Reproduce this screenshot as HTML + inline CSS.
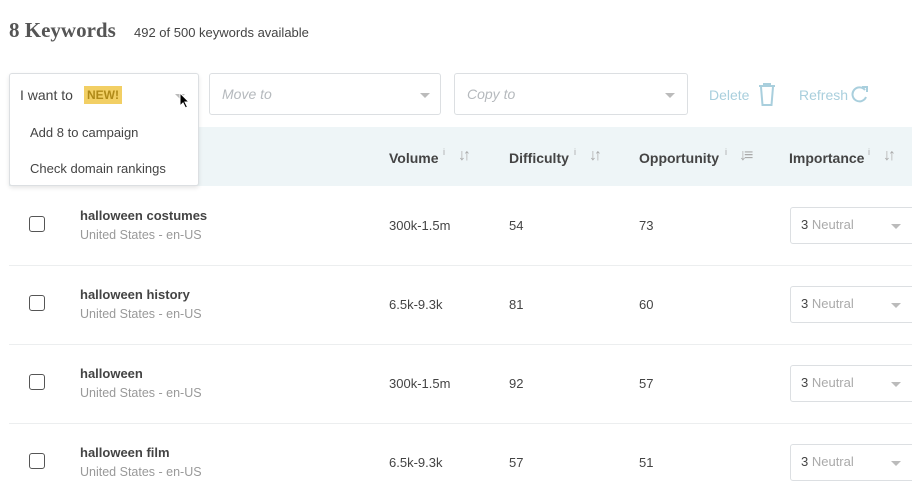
<!DOCTYPE html>
<html><head><style>
*{box-sizing:border-box;margin:0;padding:0}
body{width:912px;height:468px;overflow:hidden;background:#fff;font-family:"Liberation Sans",sans-serif;color:#444;position:relative}
.a{position:absolute;white-space:nowrap}
.sel{position:absolute;border:1px solid #dcdfe2;border-radius:3px;height:42px;top:73px;background:#fff}
.sel i{position:absolute;left:12px;top:12px;font-size:14px;color:#b5b9bd}
.tri{position:absolute;width:0;height:0;border-left:5px solid transparent;border-right:5px solid transparent;border-top:5px solid #aaa}
.hd{font-size:14px;font-weight:bold;color:#444;top:150px}
.sup{font-size:9px;color:#aaa;top:147px}
.srt{font-size:16px;color:#aaa;top:147px;letter-spacing:-3px}
.sep{position:absolute;left:9px;right:0;height:1px;background:#eceeef}
.cb{position:absolute;left:29px;width:16px;height:16px;border:1.5px solid #555;border-radius:3px}
.kw{font-size:13px;font-weight:bold;color:#444}
.loc{font-size:12.5px;color:#999}
.v{font-size:13px;color:#444}
.imp{position:absolute;left:790px;width:130px;height:37px;border:1px solid #dcdfe2;border-radius:3px;font-size:13px;padding:9px 10px;color:#444}
.imp span{color:#aaa}
.imp .tri{left:100px;top:16px;border-top-color:#bbb}
</style></head><body>
<div class="a" style="left:9px;top:18px;font-family:'Liberation Serif',serif;font-weight:bold;font-size:21px;color:#555">8 Keywords</div>
<div class="a" style="left:134px;top:25px;font-size:13px;color:#444">492 of 500 keywords available</div>

<div style="position:absolute;left:9px;top:127px;width:903px;height:59px;background:#eef5f7"></div>
<div class="a hd" style="left:389px">Volume</div><div class="a sup" style="left:443px">i</div><div class="a srt" style="left:458px">↓↑</div>
<div class="a hd" style="left:509px">Difficulty</div><div class="a sup" style="left:574px">i</div><div class="a srt" style="left:589px">↓↑</div>
<div class="a hd" style="left:639px">Opportunity</div><div class="a sup" style="left:725px">i</div><div class="a srt" style="left:739px">↓≡</div>
<div class="a hd" style="left:789px">Importance</div><div class="a sup" style="left:868px">i</div><div class="a srt" style="left:883px">↓↑</div>

<div class="sel" style="left:209px;width:232px"><i>Move to</i><div class="tri" style="right:10px;top:19px;border-top-color:#bbb"></div></div>
<div class="sel" style="left:454px;width:234px"><i>Copy to</i><div class="tri" style="right:12px;top:19px;border-top-color:#bbb"></div></div>
<div class="a" style="left:709px;top:87px;font-size:14px;color:#a9cfdd">Delete</div>
<svg class="a" style="left:757px;top:82px" width="20" height="25" viewBox="0 0 20 25"><path d="M2 4h16M7 4V2h6v2M4 5l1.5 18h9L16 5" fill="none" stroke="#a9cfdd" stroke-width="2"/></svg>
<div class="a" style="left:799px;top:87px;font-size:14px;color:#a9cfdd">Refresh</div>
<svg class="a" style="left:850px;top:85px" width="20" height="18" viewBox="0 0 20 18"><path d="M15 5A7 7 0 1 0 16 12" fill="none" stroke="#a9cfdd" stroke-width="2"/><path d="M12 2l5 0 0 5" fill="none" stroke="#a9cfdd" stroke-width="2"/></svg>

<div style="position:absolute;left:9px;top:73px;width:190px;height:113px;background:#fff;border:1px solid #dcdfe2;border-radius:3px;box-shadow:0 2px 4px rgba(0,0,0,.1)"></div>
<div class="a" style="left:20px;top:87px;font-size:14px;color:#444">I want to</div>
<div class="a" style="left:84px;top:86px;background:#f2cf64;color:#b08a18;font-size:12px;font-weight:bold;padding:2px 3px">NEW!</div>
<div class="tri" style="left:175px;top:94px;border-top-color:#bbb"></div>
<svg class="a" style="left:179px;top:92px" width="12" height="18" viewBox="0 0 12 18"><path d="M1 1v13l3-3 2.5 5 2-1-2.5-5h4z" fill="#000" stroke="#fff" stroke-width="1"/></svg>
<div class="a" style="left:30px;top:125px;font-size:13px;color:#444">Add 8 to campaign</div>
<div class="a" style="left:30px;top:161px;font-size:13px;color:#444">Check domain rankings</div>

<div class="sep" style="top:265px"></div><div class="sep" style="top:344px"></div><div class="sep" style="top:423px"></div>

<div class="cb" style="top:216px"></div>
<div class="a kw" style="left:80px;top:208px">halloween costumes</div>
<div class="a loc" style="left:80px;top:228px">United States - en-US</div>
<div class="a v" style="left:389px;top:218px">300k-1.5m</div><div class="a v" style="left:509px;top:218px">54</div><div class="a v" style="left:639px;top:218px">73</div>
<div class="imp" style="top:207px">3 <span>Neutral</span><div class="tri"></div></div>

<div class="cb" style="top:295px"></div>
<div class="a kw" style="left:80px;top:287px">halloween history</div>
<div class="a loc" style="left:80px;top:307px">United States - en-US</div>
<div class="a v" style="left:389px;top:297px">6.5k-9.3k</div><div class="a v" style="left:509px;top:297px">81</div><div class="a v" style="left:639px;top:297px">60</div>
<div class="imp" style="top:286px">3 <span>Neutral</span><div class="tri"></div></div>

<div class="cb" style="top:374px"></div>
<div class="a kw" style="left:80px;top:366px">halloween</div>
<div class="a loc" style="left:80px;top:386px">United States - en-US</div>
<div class="a v" style="left:389px;top:376px">300k-1.5m</div><div class="a v" style="left:509px;top:376px">92</div><div class="a v" style="left:639px;top:376px">57</div>
<div class="imp" style="top:365px">3 <span>Neutral</span><div class="tri"></div></div>

<div class="cb" style="top:453px"></div>
<div class="a kw" style="left:80px;top:445px">halloween film</div>
<div class="a loc" style="left:80px;top:465px">United States - en-US</div>
<div class="a v" style="left:389px;top:455px">6.5k-9.3k</div><div class="a v" style="left:509px;top:455px">57</div><div class="a v" style="left:639px;top:455px">51</div>
<div class="imp" style="top:444px">3 <span>Neutral</span><div class="tri"></div></div>
</body></html>
